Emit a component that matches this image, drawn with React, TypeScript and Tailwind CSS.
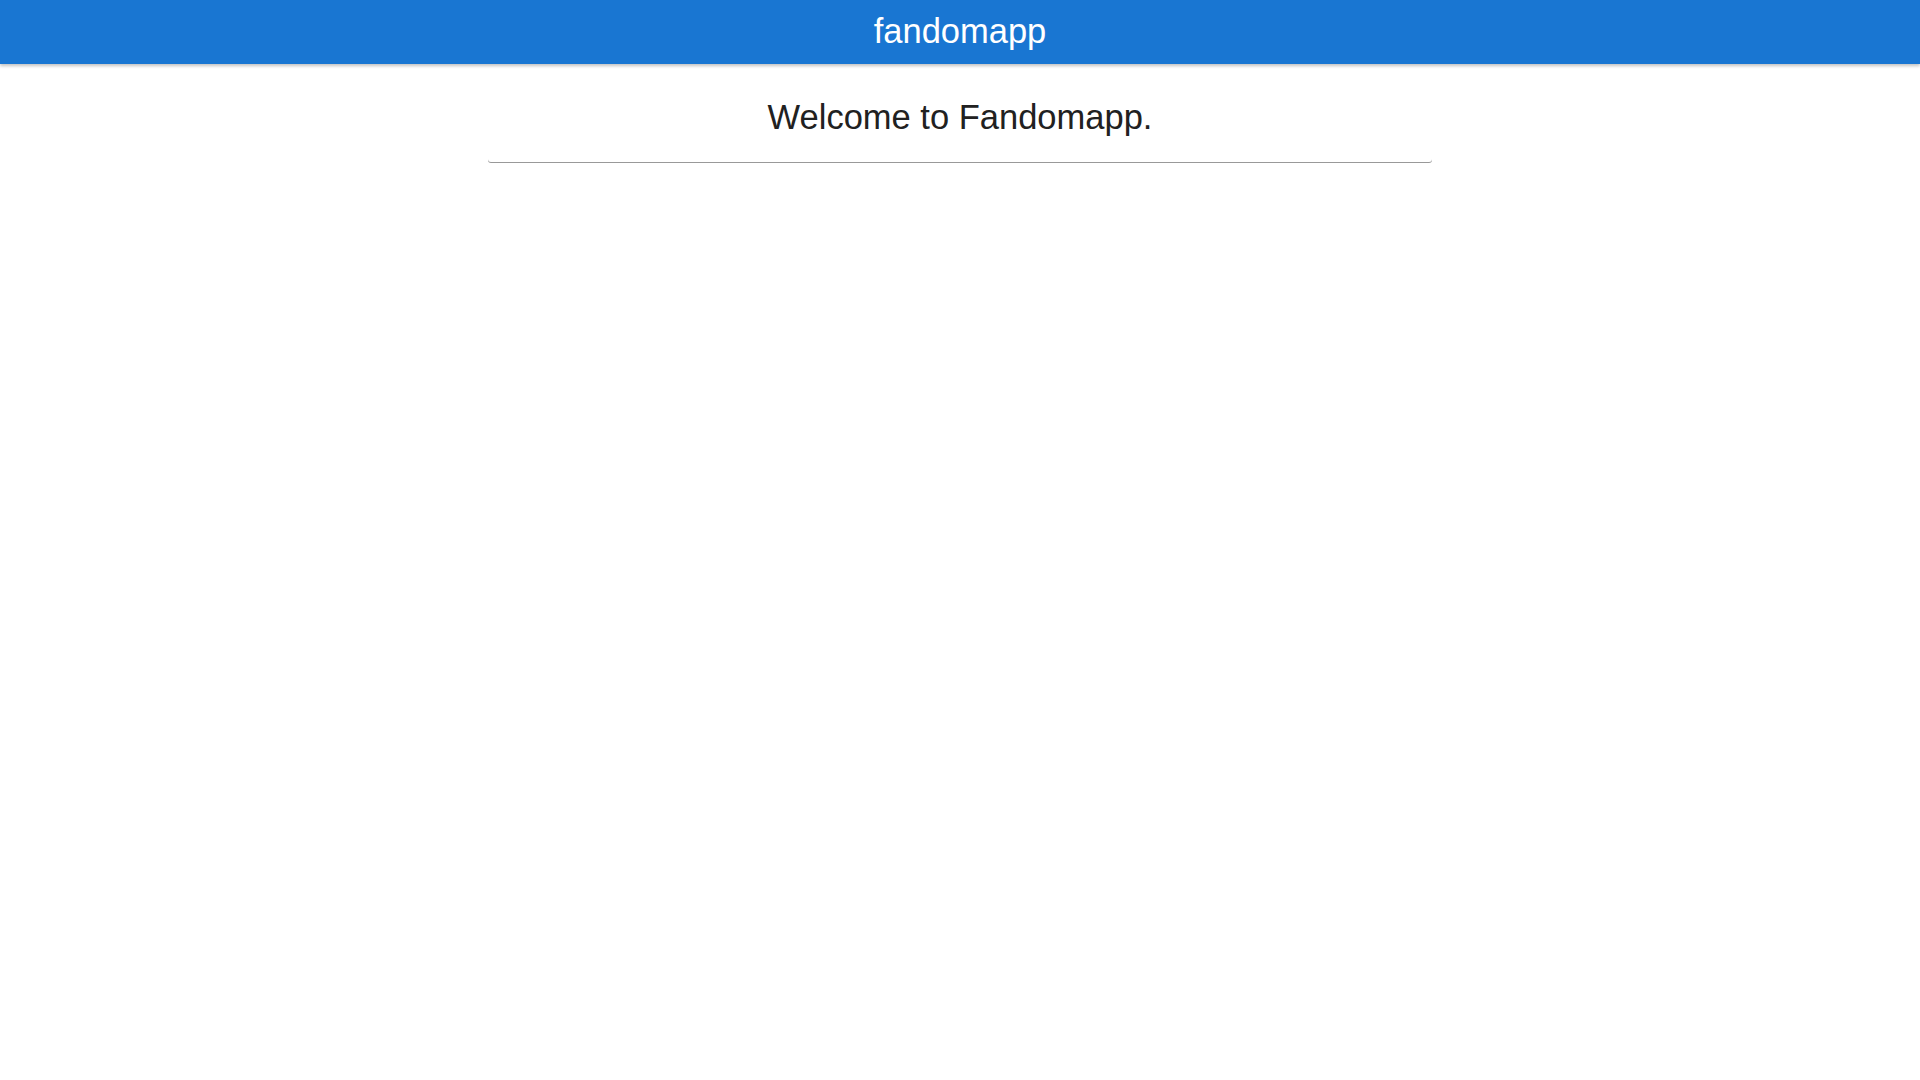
export default function App() {
  return (
    <div className="min-h-screen bg-white" style={{ fontFamily: '"Liberation Sans", Arial, sans-serif' }}>
      <header className="h-16 bg-[#1976d2] flex items-center justify-center shadow-[0_2px_3px_rgba(0,0,0,0.24)]">
        <span className="text-white text-[34.5px] leading-none -mt-[1px]">fandomapp</span>
      </header>
      <main className="flex justify-center">
        <div className="w-[944px] pt-[33px] pb-[25px] text-center rounded-b-[3px] shadow-[0_1px_0_rgba(0,0,0,0.4)]">
          <h1 className="text-[34.5px] leading-[40px] text-[#212121]">Welcome to Fandomapp.</h1>
        </div>
      </main>
    </div>
  );
}
